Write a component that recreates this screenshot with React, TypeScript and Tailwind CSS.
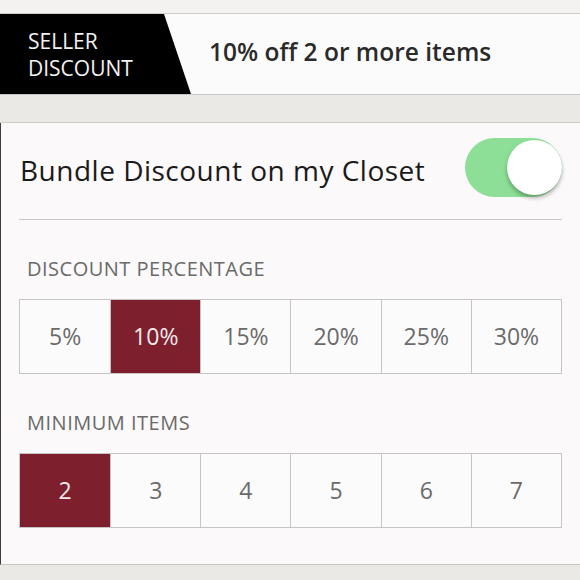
const percents = ["5%", "10%", "15%", "20%", "25%", "30%"];
const items = ["2", "3", "4", "5", "6", "7"];

function Segments({ options, selected }: { options: string[]; selected: string }) {
  return (
    <div className="grid grid-cols-6 h-[75px] border border-[#c6c4c4] bg-[#fcfbfb]">
      {options.map((o, i) => (
        <div
          key={o}
          className={
            "flex items-center justify-center text-[23px] " +
            (i > 0 ? "border-l border-[#c6c4c4] " : "") +
            (o === selected ? "bg-[#7e1f2e] text-[#f4e9ea]" : "text-[#6a6a6a]")
          }
        >
          {o}
        </div>
      ))}
    </div>
  );
}

export default function App() {
  return (
    <div
      className="w-[580px] h-[580px] overflow-hidden bg-[#ebe9e5]"
      style={{ fontFamily: '"Open Sans", "Liberation Sans", sans-serif' }}
    >
      <div className="h-[14px] bg-[#f3f2f1] border-b border-[#cdcccb]" />

      {/* header strip */}
      <div className="flex h-[81px] bg-[#fcfbfb] border-b border-[#c9c8c7]">
        <div
          className="w-[192px] bg-black pl-[28px] pt-[14px] text-[21px] leading-[27px] text-[#f2f2f2]"
          style={{ clipPath: "polygon(0 0, 164px 0, 191px 100%, 0 100%)" }}
        >
          SELLER
          <br />
          DISCOUNT
        </div>
        <div className="flex items-center pl-[17px] pb-[3px] text-[24.5px] font-semibold text-[#2a2a2a]">
          10% off 2 or more items
        </div>
      </div>

      <div className="h-[28px] bg-[#ebe9e5] border-b border-[#cfcdca]" />

      {/* card */}
      <div className="h-[442px] bg-[#fbf9f9] border-l border-b border-l-[#3c3c3c] border-b-[#c9c8c7] px-[18px]">
        <div className="flex items-center justify-between pt-[15px] pb-[22px] border-b border-[#c9c8c8]">
          <span className="pl-[1px] pt-[4px] text-[28px] tracking-[0.5px] text-[#1a1a1a]">
            Bundle Discount on my Closet
          </span>
          <div className="flex h-[59px] w-[97px] items-center justify-end rounded-full bg-[#8ddf97]">
            <div className="h-[55px] w-[55px] rounded-full bg-white shadow-[0_3px_4px_rgba(0,0,0,0.3)]" />
          </div>
        </div>

        <div className="pl-[8px] pt-[36px] pb-[17px] text-[20px] leading-[26px] tracking-[0.5px] text-[#6a6a6a]">
          DISCOUNT PERCENTAGE
        </div>
        <Segments options={percents} selected="10%" />

        <div className="pl-[8px] pt-[36px] pb-[17px] text-[20px] leading-[26px] tracking-[0.5px] text-[#6a6a6a]">
          MINIMUM ITEMS
        </div>
        <Segments options={items} selected="2" />
      </div>
    </div>
  );
}
